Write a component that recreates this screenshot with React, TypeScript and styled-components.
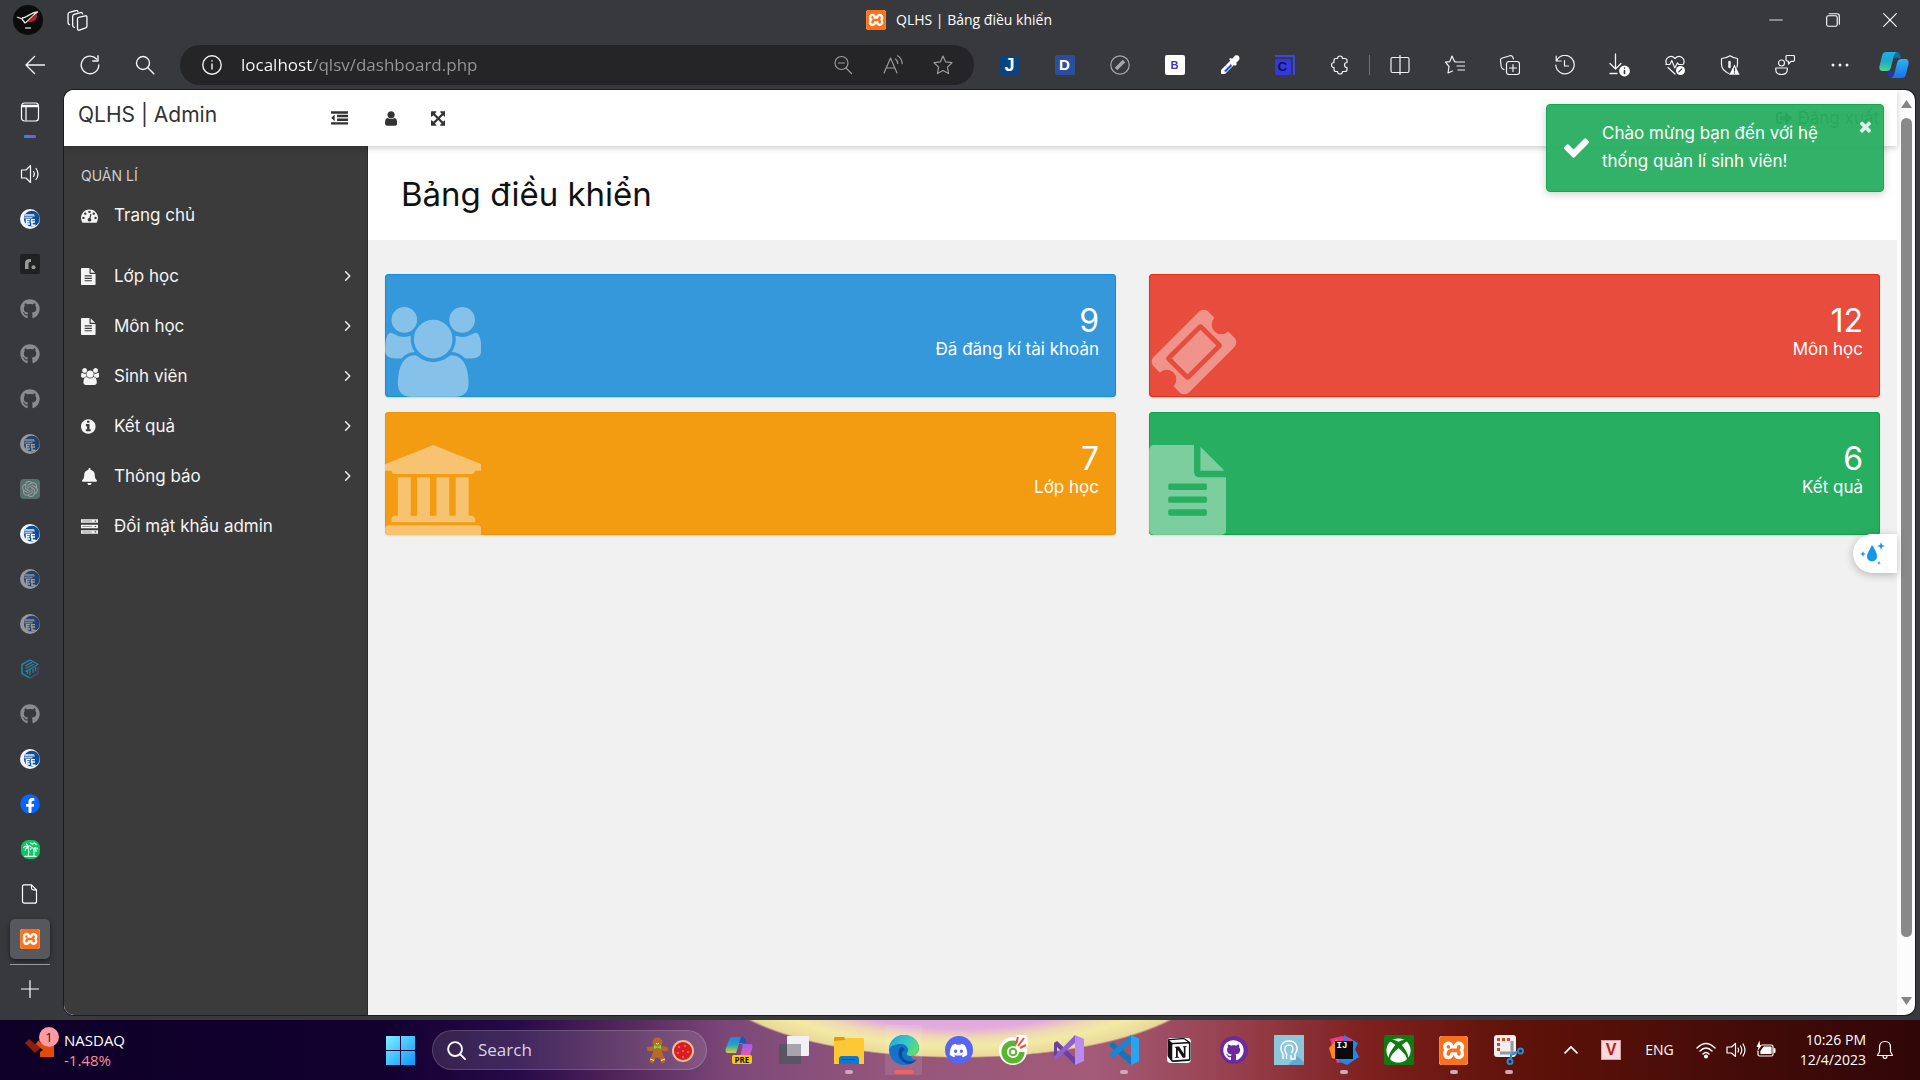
import React from "react";
import styled, { createGlobalStyle, css } from "styled-components";
import { FaGithub, FaFacebook, FaXbox, FaDiscord, FaBell, FaSignOutAlt } from "react-icons/fa";
import { SiXampp, SiOpenai, SiNotion } from "react-icons/si";

const uiFont = `"Open Sans", "Noto Sans", sans-serif`;
const siteFont = `Inter, "Noto Sans", sans-serif`;

const GlobalStyle = createGlobalStyle`
  *, *::before, *::after { box-sizing: border-box; }
  body { margin: 0; background: #38393d; }
  button { border: 0; padding: 0; background: none; color: inherit; font: inherit; cursor: pointer; }
  a { color: inherit; text-decoration: none; }
  svg { display: block; flex: none; }
  h1, h2, p, ul { margin: 0; padding: 0; font-weight: 400; }
  ul { list-style: none; }
`;

/* ---------- Font Awesome 4 glyphs used by the site ---------- */

const glyphs = {
  users: { w: 1920, d: "M593 896q-162 5-265 128h-134q-82 0-138-40.5t-56-118.5q0-353 124-353 6 0 43.5 21t97.5 42.5 119 21.5q67 0 133-23-5 37-5 66 0 139 81 256zm1071 637q0 120-73 189.5t-194 69.5h-874q-121 0-194-69.5t-73-189.5q0-53 3.5-103.5t14-109 26.5-108.5 43-97.5 62-81 85.5-53.5 111.5-20q10 0 43 21.5t73 48 107 48 135 21.5 135-21.5 107-48 73-48 43-21.5q61 0 111.5 20t85.5 53.5 62 81 43 97.5 26.5 108.5 14 109 3.5 103.5zm-1024-1277q0 106-75 181t-181 75-181-75-75-181 75-181 181-75 181 75 75 181zm704 384q0 159-112.5 271.5t-271.5 112.5-271.5-112.5-112.5-271.5 112.5-271.5 271.5-112.5 271.5 112.5 112.5 271.5zm576 225q0 78-56 118.5t-138 40.5h-134q-103-123-265-128 81-117 81-256 0-29-5-66 66 23 133 23 59 0 119-21.5t97.5-42.5 43.5-21q124 0 124 353zm-128-609q0 106-75 181t-181 75-181-75-75-181 75-181 181-75 181 75 75 181z" },
  bank: { w: 1920, d: "M960 0l960 384v128h-128q0 26-20.5 45t-48.5 19h-1526q-28 0-48.5-19t-20.5-45h-128v-128zm-704 640h256v768h128v-768h256v768h128v-768h256v768h128v-768h256v768h59q28 0 48.5 19t20.5 45v64h-1664v-64q0-26 20.5-45t48.5-19h59v-768zm1595 960q28 0 48.5 19t20.5 45v128h-1920v-128q0-26 20.5-45t48.5-19h1782z" },
  ticket: { w: 1792, d: "M1024 452l316 316-572 572-316-316zm-211 979l618-618q19-19 19-45t-19-45l-362-362q-18-18-45-18t-45 18l-618 618q-19 19-19 45t19 45l362 362q18 18 45 18t45-18zm889-637l-907 908q-37 37-90.5 37t-90.5-37l-126-126q56-56 56-136t-56-136-136-56-136 56l-125-126q-37-37-37-90.5t37-90.5l907-906q37-37 90.5-37t90.5 37l125 125q-56 56-56 136t56 136 136 56 136-56l126 125q37 37 37 90.5t-37 90.5z" },
  file: { x: 128, w: 1536, d: "M1596 476q14 14 28 36h-472v-472q22 14 36 28zm-476 164h544v1056q0 40-28 68t-68 28h-1344q-40 0-68-28t-28-68v-1600q0-40 28-68t68-28h800v544q0 40 28 68t68 28zm160 736v-64q0-14-9-23t-23-9h-704q-14 0-23 9t-9 23v64q0 14 9 23t23 9h704q14 0 23-9t9-23zm0-256v-64q0-14-9-23t-23-9h-704q-14 0-23 9t-9 23v64q0 14 9 23t23 9h704q14 0 23-9t9-23zm0-256v-64q0-14-9-23t-23-9h-704q-14 0-23 9t-9 23v64q0 14 9 23t23 9h704q14 0 23-9t9-23z" },
  gauge: { w: 1792, d: "M384 1152q0-53-37.5-90.5t-90.5-37.5-90.5 37.5-37.5 90.5 37.5 90.5 90.5 37.5 90.5-37.5 37.5-90.5zm192-448q0-53-37.5-90.5t-90.5-37.5-90.5 37.5-37.5 90.5 37.5 90.5 90.5 37.5 90.5-37.5 37.5-90.5zm428 481l101-382q6-26-7.5-48.5t-38.5-29.5-48 6.5-30 39.5l-101 382q-60 5-107 43.5t-63 98.5q-20 77 20 146t117 89 146-20 89-117q16-60-6-117t-72-91zm660-33q0-53-37.5-90.5t-90.5-37.5-90.5 37.5-37.5 90.5 37.5 90.5 90.5 37.5 90.5-37.5 37.5-90.5zm-640-640q0-53-37.5-90.5t-90.5-37.5-90.5 37.5-37.5 90.5 37.5 90.5 90.5 37.5 90.5-37.5 37.5-90.5zm448 192q0-53-37.5-90.5t-90.5-37.5-90.5 37.5-37.5 90.5 37.5 90.5 90.5 37.5 90.5-37.5 37.5-90.5zm320 448q0 261-141 483-19 29-54 29h-1402q-35 0-54-29-141-221-141-483 0-182 71-348t191-286 286-191 348-71 348 71 286 191 191 286 71 348z" },
  info: { x: 128, w: 1536, d: "M1152 1376v-160q0-14-9-23t-23-9h-96v-512q0-14-9-23t-23-9h-320q-14 0-23 9t-9 23v160q0 14 9 23t23 9h96v320h-96q-14 0-23 9t-9 23v160q0 14 9 23t23 9h448q14 0 23-9t9-23zm-128-896v-160q0-14-9-23t-23-9h-192q-14 0-23 9t-9 23v160q0 14 9 23t23 9h192q14 0 23-9t9-23zm640 416q0 209-103 385.5t-279.5 279.5-385.5 103-385.5-103-279.5-279.5-103-385.5 103-385.5 279.5-279.5 385.5-103 385.5 103 279.5 279.5 103 385.5z" },
  server: { w: 1792, d: "M0 128h1792v384h-1792zM0 704h1792v384h-1792zM0 1280h1792v384h-1792zM128 288v64h1024v-64zM128 864v64h1024v-64zM128 1440v64h1024v-64zM1440 256v128h160v-128zM1440 832v128h160v-128zM1440 1408v128h160v-128z" },
  outdent: { w: 1792, d: "M384 544v576q0 13-9.5 22.5t-22.5 9.5q-14 0-23-9l-288-288q-9-9-9-23t9-23l288-288q9-9 23-9 13 0 22.5 9.5t9.5 22.5zm1408 768v192q0 13-9.5 22.5t-22.5 9.5h-1728q-13 0-22.5-9.5t-9.5-22.5v-192q0-13 9.5-22.5t22.5-9.5h1728q13 0 22.5 9.5t9.5 22.5zm0-384v192q0 13-9.5 22.5t-22.5 9.5h-1088q-13 0-22.5-9.5t-9.5-22.5v-192q0-13 9.5-22.5t22.5-9.5h1088q13 0 22.5 9.5t9.5 22.5zm0-384v192q0 13-9.5 22.5t-22.5 9.5h-1088q-13 0-22.5-9.5t-9.5-22.5v-192q0-13 9.5-22.5t22.5-9.5h1088q13 0 22.5 9.5t9.5 22.5zm0-384v192q0 13-9.5 22.5t-22.5 9.5h-1728q-13 0-22.5-9.5t-9.5-22.5v-192q0-13 9.5-22.5t22.5-9.5h1728q13 0 22.5 9.5t9.5 22.5z" },
  user: { x: 256, w: 1280, d: "M1536 1399q0 109-62.5 187t-150.5 78h-854q-88 0-150.5-78t-62.5-187q0-85 8.5-160.5t31.5-152 58.5-131 94-89 134.5-34.5q131 128 313 128t313-128q76 0 134.5 34.5t94 89 58.5 131 31.5 152 8.5 160.5zm-256-887q0 159-112.5 271.5t-271.5 112.5-271.5-112.5-112.5-271.5 112.5-271.5 271.5-112.5 271.5 112.5 112.5 271.5z" },
  arrows: { x: 128, w: 1536, d: "M1411 541l-355 355 355 355 144-144q29-31 70-14 39 17 39 59v448q0 26-19 45t-45 19h-448q-42 0-59-40-17-39 14-69l144-144-355-355-355 355 144 144q31 30 14 69-17 40-59 40h-448q-26 0-45-19t-19-45v-448q0-42 40-59 39-17 69 14l144 144 355-355-355-355-144 144q-19 19-45 19-12 0-24-5-40-17-40-59v-448q0-26 19-45t45-19h448q42 0 59 40 17 39-14 69l-144 144 355 355 355-355-144-144q-31-30-14-69 17-40 59-40h448q26 0 45 19t19 45v448q0 42-39 59-13 5-25 5-26 0-45-19z" },
  check: { w: 1792, d: "M1671 566q0 40-28 68l-724 724-136 136q-28 28-68 28t-68-28l-136-136-362-362q-28-28-28-68t28-68l136-136q28-28 68-28t68 28l294 295 656-657q28-28 68-28t68 28l136 136q28 28 28 68z" },
  times: { w: 1792, d: "M1490 1322q0 40-28 68l-136 136q-28 28-68 28t-68-28l-294-294-294 294q-28 28-68 28t-68-28l-136-136q-28-28-28-68t28-68l294-294-294-294q-28-28-28-68t28-68l136-136q28-28 68-28t68 28l294 294 294-294q28-28 68-28t68 28l136 136q28 28 28 68t-28 68l-294 294 294 294q28 28 28 68z" },
} as const;

type GlyphName = keyof typeof glyphs;

function Glyph({ name, size }: { name: GlyphName; size: number }) {
  const g = glyphs[name] as { x?: number; w: number; d: string };
  return (
    <svg viewBox={`${g.x ?? 0} 0 ${g.w} 1792`} height={size} width={(size * g.w) / 1792} fill="currentColor" fillRule={name === "server" ? "evenodd" : "nonzero"} aria-hidden>
      <path d={g.d} />
    </svg>
  );
}

/* ---------- Browser chrome icons ---------- */

function Line({ size = 20, children, width = 1.2 }: { size?: number; children: React.ReactNode; width?: number }) {
  return (
    <svg width={size} height={size} viewBox="0 0 20 20" fill="none" stroke="currentColor" strokeWidth={width} strokeLinecap="round" strokeLinejoin="round" aria-hidden>
      {children}
    </svg>
  );
}

const starPath = "M10 1l2.7 5.9 6.3.8-4.6 4.4 1.2 6.4L10 15.4l-5.6 3.1 1.2-6.4L1 7.7l6.3-.8z";

const XamppTile = styled.span<{ $size: number }>`
  display: block;
  width: ${(p) => p.$size}px;
  height: ${(p) => p.$size}px;
  border-radius: 3px;
  background: #fff;
  overflow: hidden;
`;

function XamppIcon({ size }: { size: number }) {
  return (
    <XamppTile $size={size}>
      <SiXampp size={size} color="#f9711a" />
    </XamppTile>
  );
}

function SchoolIcon() {
  return (
    <svg width="20" height="20" viewBox="0 0 20 20" aria-hidden>
      <circle cx="10" cy="10" r="10" fill="#f2f6fc" />
      <circle cx="11.8" cy="9.7" r="7.9" fill="#0f4c9a" />
      <path d="M4 5h10l1 2.400H4.500zM4.500 8h8v1.500H4z" fill="#a9c6e8" />
      <path d="M10 10.600H6.500V15H10M6.500 12.800h3M15 10.600h-3.500V13H15M12 13.200v3h3.500" stroke="#fff" strokeWidth="1.4" fill="none" />
    </svg>
  );
}

function LibraryHex() {
  return (
    <svg width="20" height="20" viewBox="0 0 20 20" fill="none" aria-hidden>
      <path d="M10 1L2 5.500v9L10 19" stroke="#1f7fa6" strokeWidth="1.8" />
      <path d="M10 19l8-4.500V8" stroke="#3d4f80" strokeWidth="1.5" />
      <path d="M10 1l8 4.300-8 4.700v6M5 7l7-3.600M5.500 9.500L14 5M5.500 12.500L10 10M13 9.500v4.500M15.500 8v4M7.500 11.500V15" stroke="#2488a8" strokeWidth="1.2" />
    </svg>
  );
}

function Palms() {
  return (
    <svg width="19" height="19" viewBox="0 0 20 20" fill="none" stroke="#eafff2" strokeWidth="1.2" strokeLinecap="round" aria-hidden>
      <rect width="20" height="20" rx="8" fill="#0bc665" stroke="none" />
      <path d="M7.500 17c1-3 1-6 0-9M7.500 8C6 6 4 6 3 8M7.500 8C5.500 8 4.500 9.500 4.500 11M7.500 8c0-2 0-3-2-4M7.500 8c1-2 2-2 3-1M13.500 17c.5-3 .5-5 0-8M13.500 9c-1.500-1.500-3-1-3.500 1M13.500 9c1.500-1.500 3-1 4 .5M13.500 9c1.500 0 2.500 1 2.500 3M10 3l2 1.500L14 3l2 2M4 17.300h12" />
    </svg>
  );
}

function CopilotIcon({ size }: { size: number }) {
  return (
    <svg width={size} height={size} viewBox="0 0 30 28" aria-hidden>
      <defs>
        <linearGradient id="cpA" x1="0" y1="0" x2="0" y2="1"><stop offset="0" stopColor="#14b4e8" /><stop offset=".5" stopColor="#1fa8c8" /><stop offset="1" stopColor="#4fd68a" /></linearGradient>
        <linearGradient id="cpB" x1="0" y1="0" x2="0" y2="1"><stop offset="0" stopColor="#26b6ef" /><stop offset="1" stopColor="#1f6ff0" /></linearGradient>
      </defs>
      <path d="M17 1c3 0 4 2 5 6h-7z" fill="#0a6fb8" />
      <path d="M7 1h11c-2 1-3 3-4 7l-2 8c-1 3-2 4-4 4H4c-3 0-4-2-3.500-5L3 5c.6-3 2-4 4-4z" fill="url(#cpA)" />
      <path d="M8 20h6l-1 6c-3 0-4-1-5-6z" fill="#2033c8" />
      <path d="M23 27H12c2-1 3-3 4-7l2-8c1-3 2-4 4-4h4c3 0 4 2 3.500 5L27 23c-.6 3-2 4-4 4z" fill="url(#cpB)" />
    </svg>
  );
}

function CopilotPreviewIcon() {
  return (
    <svg width="28" height="28" viewBox="0 0 28 28" aria-hidden>
      <defs>
        <linearGradient id="pvA" x1="0" y1="0" x2="0" y2="1"><stop offset="0" stopColor="#2b7fe8" /><stop offset=".5" stopColor="#22a6b8" /><stop offset="1" stopColor="#d8d23a" /></linearGradient>
        <linearGradient id="pvB" x1="0" y1="0" x2="0" y2="1"><stop offset="0" stopColor="#a05cf0" /><stop offset="1" stopColor="#f0609a" /></linearGradient>
      </defs>
      <path d="M7 1h13l-2 7h-4l-3 9H3c-2 0-3-2-2-5l3-8q1-3 3-3z" fill="url(#pvA)" />
      <path d="M18 1c2 0 3 2 3 6h-7l2-6z" fill="#1a56b8" />
      <path d="M18 8h7c3 0 3 2 2 5l-3 9h-9z" fill="url(#pvB)" />
    </svg>
  );
}

/* ---------- Chrome layout ---------- */

const Desktop = styled.div`
  min-height: 100vh;
  display: flex;
  flex-direction: column;
  background: #38393d;
  font-family: ${uiFont};
  color: #fff;
`;

const TitleBar = styled.header`
  display: grid;
  grid-template-columns: 1fr auto 1fr;
  align-items: center;
  height: 40px;
  padding-right: 2px;
`;

const TitleStart = styled.div`
  display: flex;
  align-items: center;
  gap: 24px;
  padding-left: 13px;
`;

const Avatar = styled.button`
  width: 30px;
  height: 30px;
  border-radius: 50%;
  background: #0c0c0d;
  display: grid;
  place-items: center;
`;

const TabTitle = styled.div`
  display: flex;
  align-items: center;
  gap: 10px;
  font-size: 14px;
  line-height: 20px;
  white-space: nowrap;
`;

const WindowControls = styled.div`
  display: flex;
  justify-content: flex-end;
`;

const WindowButton = styled.button`
  width: 57px;
  height: 40px;
  display: grid;
  place-items: center;
`;

const Toolbar = styled.div`
  display: flex;
  align-items: center;
  height: 50px;
  padding-left: 7px;
`;

const ToolButton = styled.button<{ $last?: boolean }>`
  width: ${(p) => (p.$last ? 53 : 55)}px;
  height: 40px;
  display: grid;
  place-items: center;
  color: #f2f2f2;
`;

const AddressBar = styled.div`
  flex: 1;
  display: flex;
  align-items: center;
  height: 40px;
  margin: 0 8px;
  padding: 0 6px 0 22px;
  border-radius: 20px;
  background: #252527;
  color: #9b9b9d;
`;

const SiteInfo = styled.button`
  color: #f2f2f2;
  margin-right: 19px;
`;

const AddressInput = styled.input`
  flex: 1;
  min-width: 0;
  border: 0;
  padding: 0;
  outline: 0;
  height: 30px;
  font: 17px/30px ${uiFont};
  color: transparent;
  background: linear-gradient(90deg, #ffffff 72px, #98989a 72px);
  -webkit-background-clip: text;
  background-clip: text;
`;

const AddressButton = styled.button`
  width: 50px;
  height: 40px;
  display: grid;
  place-items: center;
`;

const ToolDivider = styled.span`
  width: 1px;
  height: 20px;
  margin: 0 2px;
  background: #707174;
`;

const LetterTile = styled.span<{ $bg: string; $fg: string; $size?: number }>`
  display: grid;
  place-items: center;
  width: 20px;
  height: 20px;
  border-radius: 2px;
  background: ${(p) => p.$bg};
  color: ${(p) => p.$fg};
  font: 700 ${(p) => p.$size ?? 14}px/20px "Liberation Sans", sans-serif;
`;

const CopyTile = styled.span`
  border-top: 2px solid #3a45f0;
  border-right: 2px solid #3a45f0;
  padding: 2px 2px 0 0;
  ${LetterTile} { width: 16px; height: 16px; line-height: 16px; }
`;

const Workspace = styled.div`
  flex: 1;
  display: flex;
  padding: 0 5px 5px 0;
`;

const Rail = styled.nav`
  width: 64px;
  flex: none;
  display: flex;
  flex-direction: column;
  align-items: center;
  padding-right: 4px;
`;

const RailTop = styled.div`
  height: 64px;
  padding-top: 12px;
  display: flex;
  flex-direction: column;
  align-items: center;
  gap: 13px;
`;

const ProfileMark = styled.span`
  width: 12px;
  height: 3px;
  border-radius: 1px;
  background: linear-gradient(90deg, #1f8fff, #8a4fe0);
`;

const RailTab = styled.button<{ $dim?: boolean; $active?: boolean }>`
  width: 40px;
  height: 40px;
  margin-bottom: 5px;
  display: grid;
  place-items: center;
  border-radius: 5px;
  > * { opacity: ${(p) => (p.$dim ? 0.5 : 1)}; }
  ${(p) => p.$active && css`
    background: #57585d;
    box-shadow: 0 2px 5px rgba(0, 0, 0, 0.5);
  `}
`;

const RailDivider = styled.span`
  width: 40px;
  height: 1px;
  background: #98999b;
`;

const NewTab = styled.button`
  width: 40px;
  height: 48px;
  display: grid;
  place-items: center;
`;

const RoadmapTile = styled.span`
  display: grid;
  place-items: center;
  width: 20px;
  height: 20px;
  border-radius: 2px;
  background: #202123;
  color: #9a9a9b;
`;

const AiTile = styled.span`
  display: grid;
  place-items: center;
  width: 20px;
  height: 20px;
  border-radius: 4px;
  background: #74aa9c;
  color: #fff;
`;

const WhiteDisc = styled.span`
  display: block;
  border-radius: 50%;
  background: radial-gradient(circle, #fff 60%, transparent 62%);
`;

/* ---------- Site ---------- */

const Viewport = styled.div`
  position: relative;
  flex: 1;
  display: flex;
  border-radius: 10px;
  overflow: hidden;
  background: #fcfcfc;
  color: #222;
  font-family: ${siteFont};
  box-shadow: 0 0 0 1px #1b1b22;
`;

const Site = styled.div`
  flex: 1;
  display: flex;
  flex-direction: column;
  background: #f1f1f1;
`;

const SiteHeader = styled.header`
  position: relative;
  display: flex;
  align-items: center;
  height: 56px;
  background: #fff;
  box-shadow: 0 2px 6px rgba(0, 0, 0, 0.2);
  color: #333;
`;

const Brand = styled.a`
  width: 267px;
  padding: 0 0 6px 14px;
  font-size: 21px;
  line-height: 28px;
`;

const HeaderIcon = styled.button`
  display: flex;
  justify-content: center;
  width: 16px;
  margin-right: 36px;
  & + & { margin-right: 31px; }
`;

const Logout = styled.a`
  margin-left: auto;
  margin-right: 18px;
  display: flex;
  align-items: center;
  gap: 5px;
  font-size: 17px;
`;

const SiteBody = styled.div`
  flex: 1;
  display: flex;
`;

const Sidebar = styled.nav`
  width: 304px;
  flex: none;
  background: #3b3b3b;
  color: #f4f4f4;
  padding-top: 18px;
  border-right: 1px solid #2a2a2a;
`;

const SidebarLabel = styled.p`
  padding-left: 17px;
  font-size: 14px;
  line-height: 24px;
  color: #cfcfcf;
`;

const MenuItem = styled.li<{ $spaced?: boolean }>`
  margin-bottom: ${(p) => (p.$spaced ? 11 : 0)}px;
`;

const MenuLink = styled.a`
  display: grid;
  grid-template-columns: 33px 1fr 12px;
  align-items: center;
  height: 50px;
  padding: 0 13px 0 17px;
  font-size: 17px;
  line-height: 24px;
`;

const Menu = styled.ul`
  margin-top: 2px;
`;

const Main = styled.main`
  flex: 1;
`;

const PageHeading = styled.div`
  height: 94px;
  padding: 26px 33px 0;
  background: #fff;
`;

const Heading = styled.h1`
  font-size: 33px;
  line-height: 44px;
  color: #111;
`;

const CardGrid = styled.div`
  display: grid;
  grid-template-columns: 1fr 1fr;
  gap: 15px 33px;
  padding: 34px 17px;
`;

const StatCard = styled.a<{ $bg: string; $edge: string }>`
  display: flex;
  justify-content: space-between;
  align-items: flex-end;
  height: 123px;
  border-radius: 4px;
  overflow: hidden;
  background: ${(p) => p.$bg};
  box-shadow: inset 0 0 0 1px ${(p) => p.$edge}, 0 1px 2px rgba(0, 0, 0, 0.1);
  color: #fff;
`;

const StatIcon = styled.span`
  color: rgba(255, 255, 255, 0.4);
`;

const StatText = styled.div`
  align-self: flex-start;
  padding: 28px 17px 0 0;
  text-align: right;
`;

const StatNumber = styled.div`
  font-size: 32px;
  line-height: 37px;
`;

const StatLabel = styled.div`
  font-size: 17px;
  line-height: 20px;
`;

const Toast = styled.div`
  position: absolute;
  top: 14px;
  right: 31px;
  width: 338px;
  display: flex;
  align-items: center;
  gap: 11px;
  padding: 14px 44px 16px 15px;
  border-radius: 4px;
  border: 1px solid #12a850;
  background: rgba(39, 174, 96, 0.95);
  color: #fff;
  box-shadow: 0 2px 8px rgba(0, 0, 0, 0.2);
`;

const ToastText = styled.p`
  flex: 1;
  font-size: 17px;
  line-height: 28px;
`;

const ToastClose = styled.button`
  position: absolute;
  top: 13px;
  right: 9px;
  opacity: 0.85;
`;

const FloatingHelper = styled.button`
  position: absolute;
  top: 444px;
  right: 18px;
  width: 44px;
  height: 39px;
  padding-right: 5px;
  display: grid;
  place-items: center;
  border-radius: 20px 0 0 20px;
  background: #fff;
  box-shadow: 0 2px 8px rgba(0, 0, 0, 0.25);
`;

const ScrollTrack = styled.div`
  width: 18px;
  display: flex;
  flex-direction: column;
  align-items: center;
  padding: 10px 0;
`;

const ScrollThumb = styled.div`
  width: 11px;
  flex: 819;
  margin-top: 10px;
  border-radius: 6px;
  background: #898989;
`;

const ScrollRest = styled.div`
  flex: 60;
`;

const ScrollArrow = styled.svg`
  width: 11px;
  height: 8px;
  fill: #848484;
`;

/* ---------- Taskbar ---------- */

const Taskbar = styled.footer`
  display: grid;
  grid-template-columns: minmax(0, 374fr) auto minmax(0, 385fr);
  align-items: center;
  height: 60px;
  background:
    radial-gradient(248px 78px at 50% -40px, #dfa5e0 0, #e3abdc 62%, #efd9b4 74%, #f3eaa4 84%, #e9d999 98%, transparent 100%),
    linear-gradient(90deg, #0e0027 0, #12002f 20%, #280a49 27%, #4f2459 32%, #7c4878 38%, #93567c 46%, #a35b78 57%, #98414f 64%, #7e211f 71%, #5f1208 79%, #450c08 90%, #300607 100%);
`;

const Widget = styled.button`
  display: flex;
  align-items: center;
  gap: 8px;
  padding-left: 25px;
  text-align: left;
  font-size: 15px;
  line-height: 20px;
`;

const Negative = styled.span`
  display: block;
  color: #ff8c94;
`;

const WidgetIcon = styled.span`
  position: relative;
  width: 31px;
  height: 24px;
  padding-bottom: 5px;
  display: grid;
  align-items: end;
`;

const Badge = styled.span`
  position: absolute;
  top: -11px;
  right: -3px;
  width: 20px;
  height: 20px;
  border-radius: 50%;
  background: #ff9aa2;
  color: #3b1216;
  font-size: 13px;
  line-height: 20px;
  text-align: center;
`;

const Dock = styled.div`
  display: flex;
  align-items: center;
`;

const DockItem = styled.button<{ $open?: boolean; $current?: boolean }>`
  position: relative;
  width: 55px;
  height: 50px;
  padding: 0 9px;
  display: grid;
  place-items: center;
  border-radius: 5px;
  ${(p) => p.$current && css`
    background: rgba(255, 255, 255, 0.1) content-box;
  `}
  &::after {
    content: "";
    display: ${(p) => (p.$open || p.$current ? "block" : "none")};
    position: absolute;
    bottom: 1px;
    left: 50%;
    width: ${(p) => (p.$current ? 20 : 8)}px;
    height: 4px;
    border-radius: 2px;
    transform: translateX(-50%);
    background: ${(p) => (p.$current ? "#f7605f" : "#c9aab6")};
  }
`;

const SearchPill = styled.label`
  display: flex;
  align-items: center;
  gap: 12px;
  width: 275px;
  height: 40px;
  margin: 0 4px;
  padding: 0 12px 0 14px;
  border-radius: 20px;
  border: 1px solid rgba(255, 255, 255, 0.16);
  background: rgba(255, 255, 255, 0.12);
`;

const SearchInput = styled.input`
  flex: 1;
  min-width: 0;
  border: 0;
  padding: 0;
  outline: 0;
  background: none;
  font: 17px/24px ${uiFont};
  color: #fff;
  &::placeholder { color: #dcd4e0; opacity: 1; }
`;

const Preview = styled.span`
  position: relative;
`;

const PreTag = styled.span`
  position: absolute;
  left: 7px;
  bottom: 0;
  padding: 0 3px;
  border-radius: 2px;
  background: #ffc60a;
  color: #111;
  font: 700 8px/9px ${uiFont};
`;

const IdeaTile = styled.span`
  position: relative;
  display: grid;
  place-items: center;
`;

const IdeaText = styled.span`
  position: absolute;
  top: 6px;
  left: 6px;
  width: 18px;
  height: 18px;
  padding-left: 2px;
  background: #0b0b0b;
  color: #fff;
  text-align: left;
  font: 700 9px/11px "Liberation Mono", monospace;
`;

const Disc = styled.span<{ $bg: string }>`
  display: grid;
  place-items: center;
  width: 28px;
  height: 28px;
  border-radius: 50%;
  background: ${(p) => p.$bg};
`;

const NotionBox = styled.span`
  display: grid;
  place-items: center;
  width: 24px;
  height: 25px;
  border-radius: 4px;
  background: #fff;
`;

const XboxTile = styled.span`
  display: grid;
  place-items: center;
  width: 30px;
  height: 30px;
  border-radius: 2px;
  background: #107c10;
`;

const Tray = styled.div`
  display: flex;
  align-items: center;
  justify-content: flex-end;
  padding-right: 25px;
`;

const TrayButton = styled.button`
  display: grid;
  place-items: center;
  width: 30px;
  height: 40px;
`;

const TrayWide = styled(TrayButton)`
  width: 28px;
  margin-left: 11px;
`;

const Notify = styled(TrayButton)`
  width: 20px;
  margin-left: 4px;
`;

const Language = styled.button`
  margin: 0 17px 0 20px;
  font-size: 14px;
  line-height: 20px;
`;

const VTile = styled.span`
  display: grid;
  place-items: center;
  width: 20px;
  height: 20px;
  border: 1px solid #d9a3a3;
  background: #f6d9d9;
  color: #b81c20;
  font: 700 16px/18px "Liberation Sans", sans-serif;
`;

const Clock = styled.button`
  margin: 0 5px 0 19px;
  text-align: right;
  font-size: 14px;
  line-height: 20px;
  span { display: block; }
`;

/* ---------- Data ---------- */

const githubMark = <FaGithub size={20} color="#dcdcdc" />;

const railTabs: { label: string; icon: React.ReactNode; dim?: boolean; active?: boolean }[] = [
  { label: "Mute tab", icon: <Line><path d="M10.500 1.500v17L6 14H1.500V6H6zM13.500 7.500c1 1.500 1 3.500 0 5M16 4.500c2.600 3.500 2.600 7.500 0 11" /></Line> },
  { label: "School portal", icon: <SchoolIcon /> },
  { label: "Roadmap", icon: <RoadmapTile><svg width="12" height="12" viewBox="0 0 12 12" aria-hidden><path d="M1 11V5q0-4 5-4h1v3H6Q4.500 4 4.500 5.500V11z" fill="currentColor" /><circle cx="9.5" cy="9.3" r="2" fill="currentColor" /></svg></RoadmapTile> },
  { label: "GitHub", icon: githubMark, dim: true },
  { label: "GitHub", icon: githubMark, dim: true },
  { label: "GitHub", icon: githubMark, dim: true },
  { label: "School portal", icon: <SchoolIcon />, dim: true },
  { label: "ChatGPT", icon: <AiTile><SiOpenai size={16} /></AiTile>, dim: true },
  { label: "School portal", icon: <SchoolIcon /> },
  { label: "School portal", icon: <SchoolIcon />, dim: true },
  { label: "School portal", icon: <SchoolIcon />, dim: true },
  { label: "Library", icon: <LibraryHex /> },
  { label: "GitHub", icon: githubMark, dim: true },
  { label: "School portal", icon: <SchoolIcon /> },
  { label: "Facebook", icon: <WhiteDisc><FaFacebook size={20} color="#0866ff" /></WhiteDisc> },
  { label: "Forest", icon: <Palms /> },
  { label: "New document", icon: <Line><path d="M4 .8h7.500l5 5v11.400q0 2-2 2H4.500q-2 0-2-2V2.500Q2.500.8 4 .8zM11.500 1v3q0 1.800 1.800 1.800h3" /></Line> },
  { label: "QLHS", icon: <XamppIcon size={20} />, active: true },
];

const menu: { label: string; icon: React.ReactNode; expandable?: boolean }[] = [
  { label: "Trang chủ", icon: <Glyph name="gauge" size={17} /> },
  { label: "Lớp học", icon: <Glyph name="file" size={17} />, expandable: true },
  { label: "Môn học", icon: <Glyph name="file" size={17} />, expandable: true },
  { label: "Sinh viên", icon: <Glyph name="users" size={17} />, expandable: true },
  { label: "Kết quả", icon: <Glyph name="info" size={17} />, expandable: true },
  { label: "Thông báo", icon: <FaBell size={17} />, expandable: true },
  { label: "Đổi mật khẩu admin", icon: <Glyph name="server" size={17} /> },
];

const stats: { value: number; label: string; icon: GlyphName; bg: string; edge: string }[] = [
  { value: 9, label: "Đã đăng kí tài khoản", icon: "users", bg: "#3498db", edge: "#138ddd" },
  { value: 12, label: "Môn học", icon: "ticket", bg: "#e74c3c", edge: "#ea2f12" },
  { value: 7, label: "Lớp học", icon: "bank", bg: "#f39c12", edge: "#f29408" },
  { value: 6, label: "Kết quả", icon: "file", bg: "#27ae60", edge: "#0ba64c" },
];

const tools: { label: string; icon: React.ReactNode }[] = [
  { label: "Split screen", icon: <Line><path d="M7.500 2.500h-5q-1.500 0-1.500 1.500v12q0 1.500 1.500 1.500h5M12.500 2.500h5q1.500 0 1.500 1.500v12q0 1.500-1.500 1.500h-5M7.500 2.500h5M7.500 17.500h5M10 .5v19" /></Line> },
  { label: "Favourites", icon: <Line><path d="M12 7L9.500 6.600 7 1 4.800 6.600.5 7.200l3.500 4.300-1 6.500 4.500-2M13 7h6.500M12 11h7.500M13 15h6.500" /></Line> },
  { label: "Collections", icon: <Line><rect x="6.5" y="6.5" width="13" height="13" rx="2.5" /><path d="M13 9.500v7M9.500 13h7M4 14.500l-1.500-.8Q1.500 13 1.200 11.500L.5 5.500Q.3 3.500 2.300 3L10 .7q2-.4 2.700 1.300l.8 2" /></Line> },
  { label: "History", icon: <Line><path d="M1.200 1v5h5M1.500 6A9.200 9.200 0 1 1 .8 10M9.500 5.500V11h4" /></Line> },
  { label: "Downloads", icon: <svg width="22" height="24" viewBox="0 0 22 24" fill="none" stroke="currentColor" strokeWidth="1.3" strokeLinecap="round" strokeLinejoin="round" aria-hidden><path d="M6.500 1v15M1 10.500L6.500 16 12 10.500M1 20.500h7" /><circle cx="15.5" cy="18" r="5.4" fill="#fff" stroke="none" /><path d="M15.500 17.500v3M15.500 15v.1" stroke="#38393d" strokeWidth="1.6" /></svg> },
  { label: "Browser essentials", icon: <Line><path d="M1.500 9C-1 3 6-1 10 3.500 14-1 21 3 18.500 9M3 12.500l7 6.500M.8 9.500h4l2-4 3 7.500 2.500-5 1.500 1.500h4" /><circle cx="15.5" cy="15.5" r="4.5" fill="#fff" stroke="none" /><path d="M13.800 16.800l3-3" stroke="#38393d" /></Line> },
  { label: "Security", icon: <Line><path d="M10 .8q3.500 2.500 7.500 2.700V9q0 6-7.500 10.200Q1 15 1.500 9V3.500Q6.500 3.300 10 .8z" /><path d="M9.500 7v5" strokeWidth="2.5" /><path d="M14.500 9l5.500 11H9z" fill="#fff" stroke="#38393d" strokeWidth=".6" /><path d="M14.500 13v3M14.500 17.800v.1" stroke="#38393d" /></Line> },
  { label: "Feedback", icon: <Line><circle cx="6.5" cy="8" r="3" /><path d="M.8 13h11.500v1.500q0 5-5.800 5t-5.700-5zM12 6l-1-1V1.800q0-1.300 1.300-1.300h5.900q1.300 0 1.300 1.300V5q0 1.300-1.300 1.300H16L13.500 9V6.300z" /></Line> },
  { label: "Settings and more", icon: <Line><g fill="currentColor" stroke="none"><circle cx="3" cy="10" r="1.5" /><circle cx="10" cy="10" r="1.5" /><circle cx="17" cy="10" r="1.5" /></g></Line> },
];

const dock: { label: string; icon: React.ReactNode; open?: boolean; current?: boolean }[] = [
  { label: "Copilot", icon: <Preview><CopilotPreviewIcon /><PreTag>PRE</PreTag></Preview> },
  { label: "Task view", icon: <svg width="30" height="28" viewBox="0 0 30 28" aria-hidden><rect x="0" y="8" width="22" height="20" rx="1" fill="#595463" /><rect x="8" y="0" width="22" height="20" rx="1" fill="#f3f0f3" /><path d="M8 8h14v12H8z" fill="#a9a4ab" /></svg> },
  { label: "File Explorer", open: true, icon: <svg width="30" height="27" viewBox="0 0 30 27" aria-hidden><path d="M1 0h9l3 4H0V1z" fill="#dd9a0a" /><path d="M0 4l10-1 3-2h16l1 1v25H0z" fill="#fdc833" /><path d="M5 27v-5q0-3 3-3h14q3 0 3 3v5z" fill="#0f78d0" /><path d="M8 22.500h13" stroke="#0a4c94" /></svg> },
  { label: "Edge", current: true, icon: <svg width="30" height="30" viewBox="0 0 30 30" aria-hidden><defs><linearGradient id="eg" x1="0" y1="0" x2="1" y2=".5"><stop offset="0" stopColor="#1a9fe0" /><stop offset=".6" stopColor="#36c9c6" /><stop offset="1" stopColor="#5bdc74" /></linearGradient></defs><path d="M0 15C0 6 7 0 15 0s15 6 15 13c0 5-4 8-8 8 0 3 3 4 6 3-3 4-8 6-13 6C7 30 0 23 0 15z" fill="#1473c9" /><path d="M0 14C1 5 7 0 15 0c9 0 15 6 15 13 0 5-4 8-8 8-3 0-5-1-4-3 3-3 0-9-6-9C6 9 2 11 0 14z" fill="url(#eg)" /><path d="M12 12c-4 3-4 12 4 16 4 2 8 1 11-3-7 3-13 0-14-5-.5-3 1-5 3-5-1-2-2-3-4-3z" fill="#0d4a9c" /></svg> },
  { label: "Discord", icon: <Disc $bg="#5865f2"><FaDiscord size={19} /></Disc> },
  { label: "Coc Coc", icon: <svg width="30" height="30" viewBox="0 0 30 30" aria-hidden><circle cx="14" cy="16" r="14" fill="#fff" /><path d="M17 0h11l1 12-8 4z" fill="#fff" /><circle cx="14" cy="17" r="8.8" fill="none" stroke="#5cb531" strokeWidth="5.5" strokeDasharray="46 10" strokeDashoffset="1" /><circle cx="14" cy="17" r="3.3" fill="none" stroke="#5cb531" strokeWidth="2" /><path d="M17 9l2-7M19 11l6-8M21 13l6-3" stroke="#f0503c" strokeWidth="2" /></svg> },
  { label: "Visual Studio", icon: <svg width="30" height="30" viewBox="0 0 30 30" aria-hidden><path d="M0 8l3-2 18 17v7L3 12v7l-3 3z" fill="#6a3fa6" /><path d="M0 22L21 0v8L3 24z" fill="#8d5fd3" /><path d="M21 0l9 4v22l-9 4z" fill="#b98af0" /></svg> },
  { label: "Visual Studio Code", open: true, icon: <svg width="30" height="30" viewBox="0 0 30 30" aria-hidden><path d="M1 9l3-2 18 15v8L1 11.500z" fill="#0f76bd" /><path d="M1 21l3 2L22 8V0L1 18.500z" fill="#1a86cf" /><path d="M22 0l8 3.500v23L22 30z" fill="#2ba4ee" /></svg> },
  { label: "Notion", icon: <NotionBox><SiNotion size={24} color="#111" /></NotionBox> },
  { label: "GitHub Desktop", icon: <Disc $bg="#6e2a9b"><FaGithub size={21} /></Disc> },
  { label: "Head tracking", icon: <svg width="30" height="30" viewBox="0 0 30 30" fill="none" aria-hidden><rect width="30" height="30" fill="#8cc6da" /><path d="M14 30l9-9 7 6v3z" fill="#62a9d0" /><path d="M9 24v-5c-4-6-2-13 6-13s10 8 6 13v5h-4v-4M12.500 24v-5c-3-4-2-9 2.500-9s5 5 2.500 8" stroke="#fff" strokeWidth="1.4" /></svg> },
  { label: "IntelliJ IDEA", open: true, icon: <IdeaTile><svg width="30" height="30" viewBox="0 0 30 30" aria-hidden><path d="M1 4l12-3 9 4-8 22-6 1z" fill="#f0358c" /><path d="M0 13l8-9 4 22-9-3z" fill="#fc8a1d" /><path d="M15 0l14 8-3 6 4 8-12 8-9-4z" fill="#1f87f0" /><path d="M17 2l6 2-4 8z" fill="#f0358c" /></svg><IdeaText>IJ</IdeaText></IdeaTile> },
  { label: "Xbox", icon: <XboxTile><FaXbox size={25} /></XboxTile> },
  { label: "XAMPP", open: true, icon: <XamppIcon size={29} /> },
  { label: "Snipping Tool", open: true, icon: <svg width="30" height="30" viewBox="0 0 30 30" fill="none" aria-hidden><rect width="22" height="22" rx="3" fill="#f0f0f2" /><path d="M4.500 16V4.500H17" stroke="#d8441c" strokeWidth="3" strokeDasharray="3 2" /><path d="M18 6v12M6 18h17" stroke="#96979c" strokeWidth="3" /><circle cx="16" cy="26.5" r="2.5" stroke="#1c8fe0" strokeWidth="2" /><circle cx="26.5" cy="16" r="2.5" stroke="#1c8fe0" strokeWidth="2" /><path d="M17 24v-4l6-3" stroke="#1c8fe0" strokeWidth="2" /></svg> },
];

/* ---------- App ---------- */

function BrowserBar() {
  return (
    <>
      <TitleBar>
        <TitleStart>
          <Avatar aria-label="Profile">
            <svg width="24" height="20" viewBox="0 0 24 20" fill="none" aria-hidden>
              <path d="M1 7l5 2 3 4M6 8c5 0 9-6 16-6-6 3-9 9-13 11" stroke="#e8e8e8" strokeWidth="1.3" />
              <path d="M21 4c1 5-3 9-10 8 3-2 5-6 10-8z" fill="#b3202a" />
              <path d="M9 18h6" stroke="#bbb" strokeWidth="1.5" />
            </svg>
          </Avatar>
          <button aria-label="Workspaces">
            <Line size={21}><path d="M11 7l6.500-1.500q1.500-.2 1.500 1.300v8.700q0 1.200-1.200 1.600l-6 2q-1.800.5-1.800-1.300V8.500Q10 7.200 11 7zM7 16.500l-1-.5q-.6-.4-.6-1.300V6q0-1.400 1.300-1.800L13 2.400q1.500-.3 1.800 1.300M2.500 14l-.9-.5Q1 13 1 12V4q0-1.400 1.300-1.800L8.500.5q1.500-.3 1.800 1" /></Line>
          </button>
        </TitleStart>
        <TabTitle>
          <XamppIcon size={20} />
          <span>QLHS | Bảng điều khiển</span>
        </TabTitle>
        <WindowControls>
          <WindowButton aria-label="Minimize"><Line size={14}><path d="M1 10h18" /></Line></WindowButton>
          <WindowButton aria-label="Restore"><Line size={14} width={1.6}><rect x="1" y="4" width="15" height="15" rx="2.5" /><path d="M4.500 1H16q3 0 3 3v12" /></Line></WindowButton>
          <WindowButton aria-label="Close"><Line size={14} width={1.6}><path d="M1 1l18 18M19 1L1 19" /></Line></WindowButton>
        </WindowControls>
      </TitleBar>
      <Toolbar>
        <ToolButton aria-label="Back"><Line width={1.4}><path d="M19.500 10H1M9.500 1.500L1 10l8.500 8.500" /></Line></ToolButton>
        <ToolButton aria-label="Refresh"><Line width={1.4}><path d="M18.800 10A8.800 8.800 0 1 1 16.500 4M18 .8v5.200h-5.200" /></Line></ToolButton>
        <ToolButton aria-label="Search"><Line width={1.4}><circle cx="8" cy="8" r="6.5" /><path d="M12.800 12.800l6 6" /></Line></ToolButton>
        <AddressBar>
          <SiteInfo aria-label="View site information"><Line width={1.4}><circle cx="10" cy="10" r="9.2" /><path d="M10 9v5M10 5.800v.2" /></Line></SiteInfo>
          <AddressInput aria-label="Address" defaultValue="localhost/qlsv/dashboard.php" />
          <AddressButton aria-label="Zoom out"><Line><circle cx="8.5" cy="8" r="6.5" /><path d="M13 13l5.500 5.500M5.500 8h6" /></Line></AddressButton>
          <AddressButton aria-label="Read aloud"><Line><path d="M1 18L7.500 3 14 18M3.500 13h8M12.500 4q2 1.500 2.200 4.500M14.500.8q4.500 2.500 4.700 8" /></Line></AddressButton>
          <AddressButton aria-label="Add to favourites"><Line><path d={starPath} /></Line></AddressButton>
        </AddressBar>
        <ToolButton aria-label="JSON extension"><LetterTile $bg="#0a437f" $fg="#fff" $size={18}>J</LetterTile></ToolButton>
        <ToolButton aria-label="Dictionary"><LetterTile $bg="#2b4f9e" $fg="#fff" $size={15}>D</LetterTile></ToolButton>
        <ToolButton aria-label="Ruler"><Line><circle cx="10" cy="10" r="9.2" stroke="#a8a8aa" /><path d="M6 14l8-8" stroke="#a8a8aa" strokeWidth="3.5" strokeLinecap="butt" /></Line></ToolButton>
        <ToolButton aria-label="Bootstrap"><LetterTile $bg="#fff" $fg="#4338b8" $size={11}>B</LetterTile></ToolButton>
        <ToolButton aria-label="Colour picker">
          <svg width="20" height="20" viewBox="0 0 20 20" aria-hidden><path d="M1 19v-4L11 5l4 4L5 19z" fill="#fff" /><path d="M4 16l7-7 1 2-6 6z" fill="#1d4fd0" /><path d="M9 4l2-1 1 1 3-3.500q3-1 4 1t0 3.500L16 8l1 1-2 2z" fill="#fff" /></svg>
        </ToolButton>
        <ToolButton aria-label="Copy"><CopyTile><LetterTile $bg="#3238ea" $fg="#14143c" $size={13}>C</LetterTile></CopyTile></ToolButton>
        <ToolButton aria-label="Extensions"><Line><path d="M6 3.500h1.500a2.500 2.500 0 0 1 5 0H15q2 0 2 2v2a2.500 2.500 0 0 0 0 5v2q0 2-2 2h-2.500a2.500 2.500 0 0 1-5 0H6q-2 0-2-2v-2a2.500 2.500 0 0 1 0-5v-2q0-2 2-2z" /></Line></ToolButton>
        <ToolDivider />
        {tools.map((t) => (
          <ToolButton key={t.label} aria-label={t.label}>{t.icon}</ToolButton>
        ))}
        <ToolButton $last aria-label="Copilot"><CopilotIcon size={30} /></ToolButton>
      </Toolbar>
    </>
  );
}

function TabRail() {
  return (
    <Rail aria-label="Tabs">
      <RailTop>
        <Line><rect x="1.5" y="1" width="17" height="18" rx="3" /><path d="M2.500 4h15" strokeWidth="2.4" /><path d="M6 5v13" /></Line>
        <ProfileMark />
      </RailTop>
      {railTabs.map((t, i) => (
        <RailTab key={i} aria-label={t.label} $dim={t.dim} $active={t.active}>{t.icon}</RailTab>
      ))}
      <RailDivider />
      <NewTab aria-label="New tab"><Line><path d="M1.500 10h17M10 1.500v17" /></Line></NewTab>
    </Rail>
  );
}

function Dashboard() {
  return (
    <Viewport>
      <Site>
        <SiteHeader>
          <Brand href="#">QLHS | Admin</Brand>
          <HeaderIcon aria-label="Toggle menu"><Glyph name="outdent" size={17} /></HeaderIcon>
          <HeaderIcon aria-label="Account"><Glyph name="user" size={17} /></HeaderIcon>
          <HeaderIcon aria-label="Full screen"><Glyph name="arrows" size={17} /></HeaderIcon>
          <Logout href="#"><FaSignOutAlt size={16} />Đăng xuất</Logout>
        </SiteHeader>
        <SiteBody>
          <Sidebar>
            <SidebarLabel>QUẢN LÍ</SidebarLabel>
            <Menu>
              {menu.map((m, i) => (
                <MenuItem key={m.label} $spaced={i === 0}>
                  <MenuLink href="#">
                    {m.icon}
                    <span>{m.label}</span>
                    {m.expandable && <Line size={12} width={2.4}><path d="M6 3l7 7-7 7" /></Line>}
                  </MenuLink>
                </MenuItem>
              ))}
            </Menu>
          </Sidebar>
          <Main>
            <PageHeading><Heading>Bảng điều khiển</Heading></PageHeading>
            <CardGrid>
              {stats.map((s) => (
                <StatCard key={s.label} href="#" $bg={s.bg} $edge={s.edge}>
                  <StatIcon><Glyph name={s.icon} size={90} /></StatIcon>
                  <StatText>
                    <StatNumber>{s.value}</StatNumber>
                    <StatLabel>{s.label}</StatLabel>
                  </StatText>
                </StatCard>
              ))}
            </CardGrid>
          </Main>
        </SiteBody>
      </Site>
      <ScrollTrack>
        <ScrollArrow viewBox="0 0 11 8"><path d="M5.500 0L11 8H0z" /></ScrollArrow>
        <ScrollThumb />
        <ScrollRest />
        <ScrollArrow viewBox="0 0 11 8"><path d="M0 0h11L5.500 8z" /></ScrollArrow>
      </ScrollTrack>
      <Toast role="status">
        <Glyph name="check" size={29} />
        <ToastText>Chào mừng bạn đến với hệ thống quản lí sinh viên!</ToastText>
        <ToastClose aria-label="Close"><Glyph name="times" size={17} /></ToastClose>
      </Toast>
      <FloatingHelper aria-label="Assistant">
        <svg width="26" height="24" viewBox="0 0 26 24" fill="#1496ea" aria-hidden>
          <path d="M12 3c4 6 5 8.500 5 11.500a5 5 0 0 1-10 0C7 11.500 9 9 12 3z" />
          <path d="M21 0l1 3 3 1-3 1-1 3-1-3-3-1 3-1zM3 9l.8 2.200L6 12l-2.200.8L3 15l-.8-2.200L0 12l2.200-.8zM19 19l.6 1.400L21 21l-1.400.6L19 23l-.6-1.400L17 21l1.400-.6z" />
        </svg>
      </FloatingHelper>
    </Viewport>
  );
}

function WindowsTaskbar() {
  return (
    <Taskbar>
      <Widget>
        <WidgetIcon>
          <svg width="31" height="18" viewBox="0 0 31 18" aria-hidden>
            <path d="M0 4l4-4 6 5 5-5 5 5-10 9z" fill="#8c1f10" />
            <path d="M13 2l10 6 6-6v16H15v-5l3-2-7-6z" fill="#e04a0a" />
          </svg>
          <Badge>1</Badge>
        </WidgetIcon>
        <span>NASDAQ<Negative>-1.48%</Negative></span>
      </Widget>
      <Dock>
        <DockItem aria-label="Start">
          <svg width="29" height="29" viewBox="0 0 29 29" aria-hidden>
            <defs><linearGradient id="win" x1="0" y1="0" x2="1" y2="1"><stop offset="0" stopColor="#7df0ff" /><stop offset="1" stopColor="#0d95ff" /></linearGradient></defs>
            <path d="M0 0h14v14H0zM15 0h14v14H15zM0 15h14v14H0zM15 15h14v14H15z" fill="url(#win)" />
          </svg>
        </DockItem>
        <SearchPill>
          <Line size={19} width={2}><circle cx="8.5" cy="8.5" r="7.3" /><path d="M14 14l5 5" /></Line>
          <SearchInput aria-label="Search" placeholder="Search" />
          <svg width="47" height="27" viewBox="0 0 47 27" aria-hidden>
            <g stroke="#b56a28" strokeLinecap="round"><path d="M2 12l8-1 9 1M8 16l-3 8M13 16l3 8" strokeWidth="4.5" /><path d="M10.500 10v7" strokeWidth="8" /></g>
            <circle cx="10.5" cy="5.5" r="5" fill="#b56a28" />
            <path d="M7 8l3.500 1.500L14 8v4l-3.500-1.500L7 12z" fill="#74e030" />
            <path d="M3 22l4 1.500M14 23.500l4-1.500M9 6.500q1.500 1 3 0" stroke="#fff" fill="none" />
            <circle cx="36" cy="14" r="11" fill="#edbd90" />
            <circle cx="36" cy="14" r="9" fill="#dc1c22" />
            <g fill="#ffb0a0"><circle cx="32" cy="10" r=".8" /><circle cx="38" cy="9" r=".8" /><circle cx="36" cy="14" r=".8" /><circle cx="31" cy="16" r=".8" /><circle cx="41" cy="15" r=".8" /><circle cx="36" cy="20" r=".8" /></g>
          </svg>
        </SearchPill>
        {dock.map((d) => (
          <DockItem key={d.label} aria-label={d.label} $open={d.open} $current={d.current}>{d.icon}</DockItem>
        ))}
      </Dock>
      <Tray>
        <TrayButton aria-label="Hidden icons"><Line size={14} width={2.4}><path d="M1.500 14L10 5.500l8.500 8.500" /></Line></TrayButton>
        <TrayWide aria-label="Keyboard"><VTile>V</VTile></TrayWide>
        <Language>ENG</Language>
        <TrayButton aria-label="Wi-Fi"><Line width={1.5}><path d="M1 8q9-9 18 0M4 11q6-6 12 0M7 14q3-3 6 0" /><circle cx="10" cy="16.5" r="1.3" fill="currentColor" /></Line></TrayButton>
        <TrayButton aria-label="Volume"><Line><path d="M9.500 3.500v13L5.500 13H1V7h4.500zM12 8q1.200 2 0 4M14.500 6q2.500 4 0 8M17 4q4 6 0 12" /></Line></TrayButton>
        <TrayButton aria-label="Battery"><Line><path d="M6 5h9.500q1.500 0 1.500 1.500v8q0 1.500-1.500 1.500h-12Q2 16 2 14.500V11" /><path d="M5 13.500V11l3-4h7v6.500z" fill="currentColor" /><path d="M18.500 9v3" strokeWidth="2" /><path d="M3.500.5L.5 7h2l-1 4L6 5H4z" fill="currentColor" stroke="none" /></Line></TrayButton>
        <Clock><span>10:26 PM</span><span>12/4/2023</span></Clock>
        <Notify aria-label="Notifications"><Line><path d="M10 1.500q-5.500 0-5.500 6v4L2.500 15.500h15l-2-4v-4q0-6-5.500-6zM8 15.800q0 2.700 2 2.700t2-2.700" /></Line></Notify>
      </Tray>
    </Taskbar>
  );
}

export default function App() {
  return (
    <>
      <GlobalStyle />
      <Desktop>
        <BrowserBar />
        <Workspace>
          <TabRail />
          <Dashboard />
        </Workspace>
        <WindowsTaskbar />
      </Desktop>
    </>
  );
}
